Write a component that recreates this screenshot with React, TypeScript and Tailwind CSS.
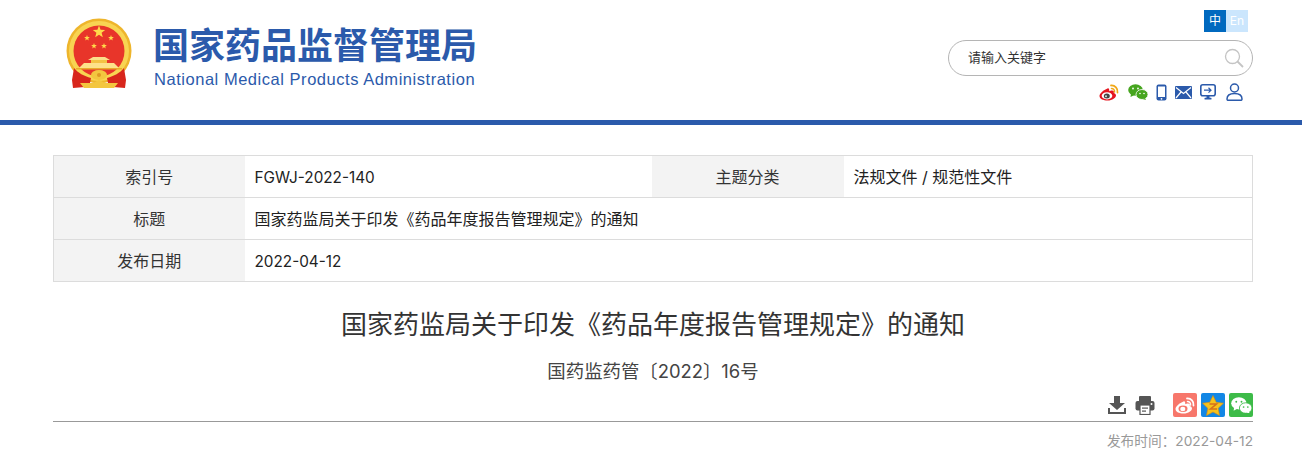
const CJK = "font-['Inter','Noto_Sans_CJK_SC',sans-serif]";

function Star({ x, y, r, fill = '#ffd94a' }: { x: number; y: number; r: number; fill?: string }) {
    const pts = [];
    for (let i = 0; i < 10; i++) {
        const a = -Math.PI / 2 + (i * Math.PI) / 5;
        const d = i % 2 === 0 ? r : r * 0.42;
        pts.push(`${(x + d * Math.cos(a)).toFixed(2)},${(y + d * Math.sin(a)).toFixed(2)}`);
    }
    return <polygon points={pts.join(' ')} fill={fill} />;
}

function Emblem() {
    return (
        <svg width="66" height="71" viewBox="0 0 66 71">
            {/* wreath */}
            <circle cx="33" cy="33" r="32.5" fill="#eeb52c" />
            <circle cx="33" cy="33" r="30" fill="#f8d452" />
            <circle cx="33" cy="33" r="25.500" fill="#e8352a" />
            <Star x={33} y={14} r={6.500} />
            <Star x={21} y={20} r={3} />
            <Star x={45} y={20} r={3} />
            <Star x={28} y={28} r={3} />
            <Star x={38} y={28} r={3} />
            {/* gate */}
            <path d="M27 39 H39 L44 42 H22 Z" fill="#fbe08a" />
            <rect x="25" y="42" width="16" height="3" fill="#f4c344" />
            <path d="M18 45 H48 L53 50 H13 Z" fill="#fde28a" />
            <rect x="10" y="50" width="46" height="1.500" fill="#e9ac2c" />
            {/* ribbons */}
            <path d="M8 50 C12 55 18 58 25 60 L24 65 L17 65 L19 69 L7 70 L6 62 Z" fill="#d8261c" />
            <path d="M58 50 C54 55 48 58 41 60 L42 65 L49 65 L47 69 L59 70 L60 62 Z" fill="#d8261c" />
            {/* wheel */}
            <ellipse cx="33" cy="57" rx="8" ry="5" fill="#f3c63f" />
            <circle cx="33" cy="57" r="2" fill="#dd9a24" />
            <path d="M14 65 H27 L33 62 L39 65 H52 L48 70 H18 Z" fill="#f3c63f" />
        </svg>
    );
}

function Weibo({ size = 20 }: { size?: number }) {
    return (
        <svg width={size} height={size * 0.85} viewBox="0 0 20 17">
            <path d="M8.500 4.500C4.500 6 .5 9.500 .5 12c0 3 4 4.500 8 4.500 5 0 8.500-2.700 8.500-5 0-1.600-1.500-2.200-2.300-2.500.5-1.300.4-2.500-1.700-2.500-1 0-2.200.4-2.800.7.300-1.500-.4-3.700-1.700-2.700z" fill="#e5141f" />
            <ellipse cx="8" cy="11.800" rx="5.300" ry="3.600" fill="#fff" />
            <ellipse cx="7.800" cy="12" rx="3" ry="2.500" fill="#444" />
            <circle cx="7" cy="12.300" r="1" fill="#ddd" />
            <path d="M12 1.500a6 6 0 0 1 6.500 7" fill="none" stroke="#f0a818" strokeWidth="1.800" strokeLinecap="round" />
            <path d="M12.500 4.500a3 3 0 0 1 3 3.500" fill="none" stroke="#f0a818" strokeWidth="1.500" strokeLinecap="round" />
        </svg>
    );
}

function Wechat({ color = '#46a51f', eye = '#fff', ring = '#fff', size = 20 }: { color?: string; eye?: string; ring?: string; size?: number }) {
    return (
        <svg width={size} height={size * 0.8} viewBox="0 0 20 16">
            <ellipse cx="7.500" cy="6" rx="7.300" ry="5.800" fill={color} />
            <path d="M3 9.500 L2.500 13 L6.500 11 Z" fill={color} />
            <ellipse cx="14" cy="10.500" rx="6" ry="5" stroke={ring} strokeWidth="0.800" fill={color} />
            <path d="M17 14 L18 16 L14.500 15 Z" fill={color} />
            <circle cx="5" cy="4.500" r="0.900" fill={eye} />
            <circle cx="10" cy="4.500" r="0.900" fill={eye} />
            <circle cx="12" cy="9.500" r="0.800" fill={eye} />
            <circle cx="16" cy="9.500" r="0.800" fill={eye} />
        </svg>
    );
}

function TopIcons() {
    const blue = '#2b5aab';
    return (
        <div className="flex items-center h-[18px] mt-[7px] mr-[10px] justify-end">
            <Weibo />
            <span className="w-[9px]" />
            <Wechat />
            <svg className="ml-[8px]" width="11" height="17" viewBox="0 0 11 17">
                <rect x="0.500" y="0.500" width="10" height="16" rx="2" fill={blue} />
                <rect x="2" y="2.500" width="7" height="10.500" fill="#fff" />
                <circle cx="5.500" cy="14.800" r="0.900" fill="#fff" />
            </svg>
            <svg className="ml-[8px]" width="17" height="13" viewBox="0 0 17 13">
                <rect width="17" height="13" rx="1" fill={blue} />
                <path d="M1 1.500 L8.500 7.500 L16 1.500 M1 12 L6 6 M16 12 L11 6" fill="none" stroke="#fff" strokeWidth="1.200" />
            </svg>
            <svg className="ml-[8px]" width="16" height="16" viewBox="0 0 16 16">
                <rect x="0.800" y="0.800" width="14.400" height="10.900" rx="2" fill="#fff" stroke={blue} strokeWidth="1.600" />
                <path d="M4 6.200 H11 M8.500 3.800 L11 6.200 L8.500 8.600" fill="none" stroke={blue} strokeWidth="1.200" />
                <rect x="6.500" y="11.500" width="3" height="2.500" fill={blue} />
                <rect x="4.500" y="13.800" width="7" height="1.800" rx="0.500" fill={blue} />
            </svg>
            <svg className="ml-[10px]" width="17" height="18" viewBox="0 0 17 18">
                <circle cx="8.500" cy="5" r="4" fill="none" stroke={blue} strokeWidth="1.500" />
                <path d="M1 16 C1 12 4 10.500 8.500 10.500 C13 10.500 16 12 16 16 C16 17 15.500 17.300 15 17.300 H2 C1.500 17.300 1 17 1 16 Z" fill="none" stroke={blue} strokeWidth="1.500" />
            </svg>
        </div>
    );
}

function Header() {
    return (
        <header className="h-[125px] border-b-[5px] border-[#2b5aab] flex justify-between pl-[66px] pr-[49px]">
            <div className="flex pt-[18px] items-start">
                <Emblem />
                <div className="ml-[21px] pt-[8px]">
                    <div className="text-[36px] leading-[40px] font-bold text-[#2b5aab] whitespace-nowrap">国家药品监督管理局</div>
                    <div className="text-[16.500px] leading-[20px] mt-[3px] ml-[1px] tracking-[0.530px] text-[#2b5aab] whitespace-nowrap font-['Liberation_Sans',sans-serif]">National Medical Products Administration</div>
                </div>
            </div>
            <div className="w-[305px] pt-[10px]">
                <div className="flex justify-end pr-[5px] h-[22px] text-[12px] leading-[22px] text-center text-white">
                    <span className="w-[22px] bg-[#0069bf]">中</span>
                    <span className="w-[22px] bg-[#cbe6fd]">En</span>
                </div>
                <div className="h-[36px] mt-[8px] border border-[#b5b5b5] rounded-[18px] flex items-center justify-between pl-[19px] pr-[8px]">
                    <span className="text-[13px] text-[#333]">请输入关键字</span>
                    <svg width="20" height="20" viewBox="0 0 20 20">
                        <circle cx="8.500" cy="8.500" r="7" fill="none" stroke="#c4c4c4" strokeWidth="1.300" />
                        <path d="M13.500 13.500 L19 19" stroke="#c4c4c4" strokeWidth="1.800" />
                    </svg>
                </div>
                <TopIcons />
            </div>
        </header>
    );
}

function Label({ children }: { children: React.ReactNode }) {
    return <td className="bg-[#f3f3f3] text-center text-[#333] border-y border-[#dcdcdc] pt-[1px]">{children}</td>;
}

function Value({ children, span }: { children: React.ReactNode; span?: number }) {
    return <td colSpan={span} className="pl-[10px] pt-[1px] text-[#222] border-y border-[#dcdcdc]">{children}</td>;
}

function InfoTable() {
    return (
        <table className="w-[1200px] h-[127px] mt-[30px] border-collapse border-x border-[#dcdcdc] table-fixed text-[16px]">
            <colgroup>
                <col className="w-[191px]" />
                <col className="w-[407px]" />
                <col className="w-[192px]" />
                <col />
            </colgroup>
            <tbody>
                <tr className="h-[42px]">
                    <Label>索引号</Label>
                    <Value><span className="text-[15.300px]">FGWJ-2022-140</span></Value>
                    <Label>主题分类</Label>
                    <Value>法规文件 / 规范性文件</Value>
                </tr>
                <tr className="h-[42px]">
                    <Label>标题</Label>
                    <Value span={3}>国家药监局关于印发《药品年度报告管理规定》的通知</Value>
                </tr>
                <tr className="h-[42px]">
                    <Label>发布日期</Label>
                    <Value span={3}><span className="text-[15.300px]">2022-04-12</span></Value>
                </tr>
            </tbody>
        </table>
    );
}

function ShareBar() {
    return (
        <div className="h-[29px] border-b border-[#999] flex justify-end items-start">
            <svg className="mt-[2px]" width="20" height="20" viewBox="0 0 20 20">
                <path d="M7 1 H13 V8 H18 L10 15 L2 8 H7 Z" fill="#555" />
                <path d="M1 13 V19 H19 V13 H17 V17 H3 V13 Z" fill="#555" />
            </svg>
            <svg className="ml-[8px] mt-[2px]" width="20" height="20" viewBox="0 0 20 20">
                <path d="M4 7 V2 Q4 1 5 1 H15 Q16 1 16 2 V7 Z" fill="#555" />
                <rect x="0.500" y="6" width="19" height="9.500" rx="2" fill="#555" />
                <rect x="5" y="10" width="10" height="9.500" fill="#fff" stroke="#555" strokeWidth="1.200" />
                <rect x="7" y="12.500" width="6" height="1.200" fill="#555" />
                <rect x="7" y="15.500" width="4" height="1.200" fill="#555" />
                <circle cx="16.500" cy="9" r="1" fill="#fff" />
            </svg>
            <div className="ml-[18px] w-[24px] h-[24px] rounded-[2px] bg-[#f7776b] flex items-center justify-center">
                <svg width="20" height="17" viewBox="0 0 20 17">
                    <path d="M8.500 4.500C4.500 6 .5 9.500 .5 12c0 3 4 4.500 8 4.500 5 0 8.500-2.700 8.500-5 0-1.600-1.500-2.200-2.300-2.500.5-1.300.4-2.500-1.700-2.500-1 0-2.200.4-2.800.7.300-1.500-.4-3.700-1.700-2.700z" fill="#fff" />
                    <ellipse cx="8" cy="11.800" rx="4.500" ry="3.300" fill="#f7776b" />
                    <ellipse cx="7.800" cy="12" rx="2.600" ry="2.200" fill="#fff" />
                    <path d="M12 1.500a6 6 0 0 1 6.500 7" fill="none" stroke="#fff" strokeWidth="1.800" strokeLinecap="round" />
                    <path d="M12.500 4.500a3 3 0 0 1 3 3.500" fill="none" stroke="#fff" strokeWidth="1.500" strokeLinecap="round" />
                </svg>
            </div>
            <div className="ml-[4px] w-[24px] h-[24px] rounded-[2px] bg-[#1387e5] flex items-center justify-center">
                <svg width="22" height="21" viewBox="0 0 22 21">
                    <polygon points="11,0.500 14.200,7.300 21.500,8.200 16.200,13.300 17.500,20.500 11,17 4.500,20.500 5.800,13.300 0.500,8.200 7.800,7.300" fill="#f6c21c" stroke="#d98c10" strokeWidth="0.600" />
                    <path d="M7.500 9 H14.500 L8.500 14 H15" fill="none" stroke="#d6701a" strokeWidth="1.600" />
                </svg>
            </div>
            <div className="ml-[4px] w-[24px] h-[24px] rounded-[2px] bg-[#3dbb48] flex items-center justify-center">
                <Wechat color="#fff" eye="#3dbb48" ring="#3dbb48" size={21} />
            </div>
        </div>
    );
}

export default function App() {
    return (
        <div className={`w-[1302px] h-[461px] overflow-hidden bg-white ${CJK}`}>
            <Header />
            <div className="w-[1200px] ml-[53px]">
                <InfoTable />
                <h1 className="text-center text-[26px] leading-[36px] mt-[25px] text-[#333]">国家药监局关于印发《药品年度报告管理规定》的通知</h1>
                <p className="text-center text-[18.400px] leading-[24px] mt-[16px] text-[#444]">国药监药管〔2022〕16号</p>
                <div className="mt-[10px]">
                    <ShareBar />
                </div>
                <p className="text-right text-[13.700px] leading-[20px] mt-[9px] text-[#999]">发布时间：2022-04-12</p>
            </div>
        </div>
    );
}
